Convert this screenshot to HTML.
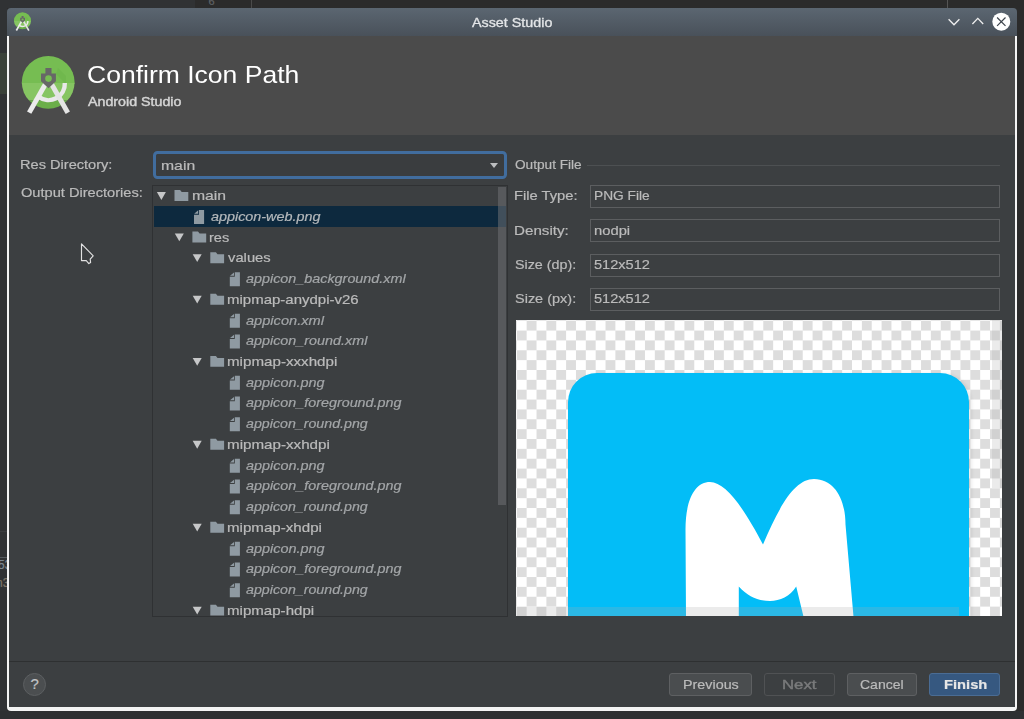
<!DOCTYPE html>
<html><head><meta charset="utf-8"><style>
*{margin:0;padding:0;box-sizing:border-box}
html,body{width:1024px;height:719px;overflow:hidden;background:#2b2b2b;position:relative;font-family:"Liberation Sans",sans-serif}
.a{position:absolute}
.t{position:absolute;white-space:nowrap;line-height:1;transform-origin:0 0;-webkit-text-stroke:0.2px currentColor}
.tri{position:absolute;width:0;height:0;border-left:4.7px solid transparent;border-right:4.7px solid transparent;border-top:7.8px solid #b4b6b8}
.fold{position:absolute;width:14.5px;height:10px}
.fold:before{content:"";position:absolute;left:0;top:0;width:6.8px;height:2px;background:#9aa5ad}
.fold:after{content:"";position:absolute;left:0;top:1.6px;width:14.5px;height:8.4px;background:#9aa5ad}
.file{position:absolute;width:10px;height:13.7px;background:#9aa5ad;clip-path:polygon(4px 0,100% 0,100% 100%,0 100%,0 4px)}
.inp{position:absolute;left:590.4px;width:409.8px;height:23px;border:1px solid #5c5e60;background:#3c3f41}
.btn{position:absolute;top:672.9px;height:23.2px;border:1px solid #5e6062;border-radius:3px;background:#4a4d4f}
</style></head><body>
<!-- outside background bits -->
<div class="a" style="left:0;top:0;width:195px;height:8px;background:#303234"></div>
<div class="a" style="left:195px;top:0;width:56px;height:8px;background:#2b2b2b"></div>
<div class="a" style="left:251px;top:0;width:1px;height:8px;background:#4a4a4a"></div><div class="a" style="left:947px;top:0;width:1px;height:8px;background:#555"></div>
<div class="t" style="left:208.5px;top:-4px;font-size:11px;color:#606366">6</div>
<div class="a" style="left:0;top:0;width:7px;height:719px;background:#303234"></div>
<div class="a" style="left:0;top:53px;width:7px;height:41px;background:#3a4139"></div>

<div class="a" style="left:0;top:711px;width:1024px;height:8px;background:#2e3032"></div>
<div class="t" style="left:-2px;top:559px;font-size:12px;color:#7d8790">53</div>
<div class="a" style="left:0;top:557px;width:7px;height:1px;background:#555a5e"></div>
<div class="t" style="left:-4px;top:577px;font-size:12px;color:#7d7568">n3</div><div class="a" style="left:0;top:531px;width:7px;height:1px;background:#3b3d3f"></div>
<!-- title bar -->
<div class="a" style="left:7px;top:7.9px;width:1010px;height:28.5px;border-radius:4px 4px 0 0;background:linear-gradient(#5b6671,#49515a)"></div>
<svg class="a" style="left:0;top:0" width="40" height="40" viewBox="0 0 40 40"><g transform="translate(22.5 20.7) scale(0.324) translate(-48.2 -82.3)">
 <clipPath id="cc2"><circle cx="48.2" cy="82.3" r="26.4"/></clipPath>
 <g clip-path="url(#cc2)">
  <rect x="20" y="54" width="58" height="30" fill="#76bd52"/>
  <rect x="20" y="83" width="58" height="17.5" fill="#86c562"/>
  <rect x="20" y="100.5" width="58" height="10" fill="#6bae49"/>
  <path d="M55.9 74 L66 84 L66 76 L58 68 Z" fill="#6db64b" opacity="0.7"/>
 </g>
 <path d="M64.8 83 A16.3 16.3 0 0 1 38.6 96.8" stroke="#e9e9e9" stroke-width="4.4" fill="none"/>
 <line x1="45.5" y1="84" x2="29.2" y2="112.6" stroke="#ebebeb" stroke-width="4.9"/>
 <line x1="51.5" y1="84" x2="67.8" y2="112.8" stroke="#e4e4e4" stroke-width="4.9"/>
 <path d="M45.4 68.1 H51.5 V73.4 H55.9 V81.3 L48.5 88.3 L41 81.3 V73.4 H45.4 Z" fill="#676767"/>
 <circle cx="48.5" cy="78.6" r="3.3" fill="#76bd52"/>
</g></svg>
<svg class="a" style="left:946px;top:16px" width="16" height="12" viewBox="0 0 16 12"><path d="M2.6 3.2 L8 8.8 L13.4 3.2" stroke="#f0f0f0" stroke-width="1.3" fill="none"/></svg>
<svg class="a" style="left:970px;top:15px" width="16" height="12" viewBox="0 0 16 12"><path d="M2.4 9 L7.8 3.4 L13.2 9" stroke="#f0f0f0" stroke-width="1.3" fill="none"/></svg>
<svg class="a" style="left:991px;top:12px" width="20" height="20" viewBox="0 0 20 20"><circle cx="10.3" cy="9.7" r="9" fill="#ffffff"/><path d="M6.1 5.5 L14.5 13.9 M14.5 5.5 L6.1 13.9" stroke="#3d444c" stroke-width="1.2"/></svg>

<!-- window body with white border -->
<div class="a" style="left:7px;top:36px;width:1010px;height:675px;background:#f4f4f4;border-radius:0 0 4px 4px"></div>
<div class="a" style="left:9px;top:36px;width:1006px;height:98.5px;background:#4b4b4b"></div>
<div class="a" style="left:9px;top:134.5px;width:1006px;height:572.5px;background:#3c3f41"></div>
<svg class="a" style="left:0;top:0" width="100" height="130" viewBox="0 0 100 130">
 <clipPath id="cc1"><circle cx="48.2" cy="82.3" r="26.4"/></clipPath>
 <g clip-path="url(#cc1)">
  <rect x="20" y="54" width="58" height="30" fill="#76bd52"/>
  <rect x="20" y="83" width="58" height="17.5" fill="#86c562"/>
  <rect x="20" y="100.5" width="58" height="10" fill="#6bae49"/>
  <path d="M55.9 74 L66 84 L66 76 L58 68 Z" fill="#6db64b" opacity="0.7"/>
 </g>
 <path d="M64.8 83 A16.3 16.3 0 0 1 38.6 96.8" stroke="#e9e9e9" stroke-width="4.4" fill="none"/>
 <line x1="45.5" y1="84" x2="29.2" y2="112.6" stroke="#ebebeb" stroke-width="4.9"/>
 <line x1="51.5" y1="84" x2="67.8" y2="112.8" stroke="#e4e4e4" stroke-width="4.9"/>
 <path d="M45.4 68.1 H51.5 V73.4 H55.9 V81.3 L48.5 88.3 L41 81.3 V73.4 H45.4 Z" fill="#676767"/>
 <circle cx="48.5" cy="78.6" r="3.3" fill="#76bd52"/>
</svg>

<!-- combo -->
<div class="a" style="left:153px;top:151.1px;width:353.9px;height:27.5px;border:3px solid #416d9e;border-radius:4.5px;background:#3a3d3f"></div>
<div class="a" style="left:489.5px;top:162.5px;width:0;height:0;border-left:4.2px solid transparent;border-right:4.2px solid transparent;border-top:5px solid #bcbec0"></div>

<!-- tree -->
<div class="a" style="left:152.3px;top:185px;width:355.5px;height:432.3px;border:1.4px solid #2f3133;background:#3c3f41"></div>
<div class="a" style="left:153.7px;top:206px;width:352.5px;height:20.7px;background:#0d293e"></div>
<div class="a" style="left:498px;top:187.3px;width:8px;height:317.5px;background:rgba(110,112,114,0.55)"></div>
<svg class="a" style="left:0;top:0" width="520" height="619" viewBox="0 0 520 619"><path d="M156.90 192.05 h9 l-4.5 7.85 z" fill="#c6c7c8"/><path d="M174.50 190.10 h5.6 l1.6 1.95 h6.6 v8.95 h-13.8 z" fill="#8f9aa2"/><path d="M199.00 210.03 h5.1 v14 h-10.1 v-9.4 h5 z M194.20 213.63 l4 -3.3 v3.3 z" fill="#8f9aa2"/><path d="M174.80 233.51 h9 l-4.5 7.85 z" fill="#c6c7c8"/><path d="M192.40 231.56 h5.6 l1.6 1.95 h6.6 v8.95 h-13.8 z" fill="#8f9aa2"/><path d="M192.70 254.24 h9 l-4.5 7.85 z" fill="#c6c7c8"/><path d="M210.30 252.29 h5.6 l1.6 1.95 h6.6 v8.95 h-13.8 z" fill="#8f9aa2"/><path d="M234.80 272.22 h5.1 v14 h-10.1 v-9.4 h5 z M230.00 275.82 l4 -3.3 v3.3 z" fill="#8f9aa2"/><path d="M192.70 295.70 h9 l-4.5 7.85 z" fill="#c6c7c8"/><path d="M210.30 293.75 h5.6 l1.6 1.95 h6.6 v8.95 h-13.8 z" fill="#8f9aa2"/><path d="M234.80 313.68 h5.1 v14 h-10.1 v-9.4 h5 z M230.00 317.28 l4 -3.3 v3.3 z" fill="#8f9aa2"/><path d="M234.80 334.41 h5.1 v14 h-10.1 v-9.4 h5 z M230.00 338.01 l4 -3.3 v3.3 z" fill="#8f9aa2"/><path d="M192.70 357.89 h9 l-4.5 7.85 z" fill="#c6c7c8"/><path d="M210.30 355.94 h5.6 l1.6 1.95 h6.6 v8.95 h-13.8 z" fill="#8f9aa2"/><path d="M234.80 375.87 h5.1 v14 h-10.1 v-9.4 h5 z M230.00 379.47 l4 -3.3 v3.3 z" fill="#8f9aa2"/><path d="M234.80 396.60 h5.1 v14 h-10.1 v-9.4 h5 z M230.00 400.20 l4 -3.3 v3.3 z" fill="#8f9aa2"/><path d="M234.80 417.33 h5.1 v14 h-10.1 v-9.4 h5 z M230.00 420.93 l4 -3.3 v3.3 z" fill="#8f9aa2"/><path d="M192.70 440.81 h9 l-4.5 7.85 z" fill="#c6c7c8"/><path d="M210.30 438.86 h5.6 l1.6 1.95 h6.6 v8.95 h-13.8 z" fill="#8f9aa2"/><path d="M234.80 458.79 h5.1 v14 h-10.1 v-9.4 h5 z M230.00 462.39 l4 -3.3 v3.3 z" fill="#8f9aa2"/><path d="M234.80 479.52 h5.1 v14 h-10.1 v-9.4 h5 z M230.00 483.12 l4 -3.3 v3.3 z" fill="#8f9aa2"/><path d="M234.80 500.25 h5.1 v14 h-10.1 v-9.4 h5 z M230.00 503.85 l4 -3.3 v3.3 z" fill="#8f9aa2"/><path d="M192.70 523.73 h9 l-4.5 7.85 z" fill="#c6c7c8"/><path d="M210.30 521.78 h5.6 l1.6 1.95 h6.6 v8.95 h-13.8 z" fill="#8f9aa2"/><path d="M234.80 541.71 h5.1 v14 h-10.1 v-9.4 h5 z M230.00 545.31 l4 -3.3 v3.3 z" fill="#8f9aa2"/><path d="M234.80 562.44 h5.1 v14 h-10.1 v-9.4 h5 z M230.00 566.04 l4 -3.3 v3.3 z" fill="#8f9aa2"/><path d="M234.80 583.17 h5.1 v14 h-10.1 v-9.4 h5 z M230.00 586.77 l4 -3.3 v3.3 z" fill="#8f9aa2"/><path d="M192.70 606.65 h9 l-4.5 7.85 z" fill="#c6c7c8"/><path d="M210.30 604.70 h5.6 l1.6 1.95 h6.6 v8.95 h-13.8 z" fill="#8f9aa2"/></svg>

<!-- output file -->
<div class="a" style="left:587px;top:164.6px;width:413px;height:1px;background:#4d5052"></div>
<div class="inp" style="top:184.8px"></div>
<div class="inp" style="top:219.3px"></div>
<div class="inp" style="top:253.6px"></div>
<div class="inp" style="top:288.4px"></div>

<!-- preview -->
<div class="a" id="preview" style="left:516px;top:320.4px;width:486px;height:295.8px;overflow:hidden;background:conic-gradient(#dddddd 0 25%,#ffffff 0 50%,#dddddd 0 75%,#ffffff 0) 0.8px 0.7px/19.73px 19.73px">
  <div class="a" style="left:52.5px;top:53px;width:403px;height:300px;border-radius:30px;background:rgba(0,0,0,0.07);filter:blur(1.5px)"></div>
  <div class="a" style="left:52.1px;top:52.4px;width:400.6px;height:300px;border-radius:29px;background:#03bdf7"></div>
  <svg class="a" style="left:0;top:0" width="486" height="296" viewBox="516 320.4 486 296">
    <path d="M686 617 L685.5 530 C685.5 500 695 482.5 710 482.5 C725 483 742 505 763 545 C780 505 795 479.5 814 479.5 C835 480 845.5 500 845.5 525 L853.5 617 L803.5 617 L796.2 587 C790 597 780 601.4 770 601.4 C758 601.4 748 597 738.8 587 L738.8 617 Z" fill="#ffffff"/>
  </svg>
  <div class="a" style="left:0;top:286.2px;width:442.5px;height:9.6px;background:rgba(170,170,170,0.24)"></div>
  <div class="a" style="left:475.8px;top:0;width:10px;height:168px;background:rgba(170,170,170,0.24)"></div>
</div>

<!-- footer -->
<div class="a" style="left:9px;top:660.5px;width:1006px;height:1.2px;background:#2e3031"></div>
<div class="a" style="left:23.3px;top:673px;width:23px;height:23px;border-radius:50%;background:#4b4e50;border:1px solid #5c5f61"></div>
<div class="t" style="left:30.6px;top:676px;font-size:15px;color:#c2c4c6">?</div>
<svg class="a" style="left:0;top:0" width="120" height="300" viewBox="0 0 120 300"><path d="M81.5 243.8 L81.5 260.6 L86.3 260.6 L88.8 263.6 L90.6 262.4 L90.2 259.2 L93.2 255.8 Z" stroke="#e2e2e2" stroke-width="1.15" fill="none" stroke-linejoin="round"/></svg>

<div class="btn" style="left:669.1px;width:82.7px"></div>
<div class="btn" style="left:764.3px;width:70.4px;background:#3c3f41;border-color:#505254"></div>
<div class="btn" style="left:846.6px;width:70.6px"></div>
<div class="btn" style="left:929.1px;width:70.9px;background:#365880;border-color:#4a6c94"></div>

<div class="t" id="title" style="left:472.14px;top:16.86px;font-size:12.8px;font-weight:normal;font-style:normal;color:#e4e6e8;transform:scaleX(1.1182);-webkit-text-stroke:0.3px #e4e6e8;">Asset Studio</div><div class="t" id="h1" style="left:86.79px;top:62.75px;font-size:24.4px;font-weight:normal;font-style:normal;color:#ffffff;transform:scaleX(1.0876);-webkit-text-stroke:0px;">Confirm Icon Path</div><div class="t" id="h2" style="left:87.68px;top:96.16px;font-size:12.8px;font-weight:normal;font-style:normal;color:#d4d4d4;transform:scaleX(1.1128);-webkit-text-stroke:0.45px #d4d4d4;">Android Studio</div><div class="t" id="resdir" style="left:20.34px;top:158.66px;font-size:12.8px;font-weight:normal;font-style:normal;color:#bbbbbb;transform:scaleX(1.1402);">Res Directory:</div><div class="t" id="outdirs" style="left:20.79px;top:186.86px;font-size:12.8px;font-weight:normal;font-style:normal;color:#bbbbbb;transform:scaleX(1.1423);">Output Directories:</div><div class="t" id="combo" style="left:160.80px;top:159.76px;font-size:12.8px;font-weight:normal;font-style:normal;color:#bbbbbb;transform:scaleX(1.2312);">main</div><div class="t" id="outfile" style="left:515.11px;top:158.96px;font-size:12.8px;font-weight:normal;font-style:normal;color:#bbbbbb;transform:scaleX(1.0658);">Output File</div><div class="t" id="ftype" style="left:514.48px;top:190.16px;font-size:12.8px;font-weight:normal;font-style:normal;color:#bbbbbb;transform:scaleX(1.1505);">File Type:</div><div class="t" id="ftypev" style="left:594.08px;top:190.16px;font-size:12.8px;font-weight:normal;font-style:normal;color:#bbbbbb;transform:scaleX(1.0726);">PNG File</div><div class="t" id="dens" style="left:514.39px;top:224.96px;font-size:12.8px;font-weight:normal;font-style:normal;color:#bbbbbb;transform:scaleX(1.1847);">Density:</div><div class="t" id="densv" style="left:594.22px;top:224.96px;font-size:12.8px;font-weight:normal;font-style:normal;color:#bbbbbb;transform:scaleX(1.1541);">nodpi</div><div class="t" id="sdp" style="left:514.79px;top:259.06px;font-size:12.8px;font-weight:normal;font-style:normal;color:#bbbbbb;transform:scaleX(1.1179);">Size (dp):</div><div class="t" id="sdpv" style="left:594.35px;top:259.06px;font-size:12.8px;font-weight:normal;font-style:normal;color:#bbbbbb;transform:scaleX(1.1378);">512x512</div><div class="t" id="spx" style="left:514.78px;top:293.26px;font-size:12.8px;font-weight:normal;font-style:normal;color:#bbbbbb;transform:scaleX(1.1318);">Size (px):</div><div class="t" id="spxv" style="left:594.35px;top:293.26px;font-size:12.8px;font-weight:normal;font-style:normal;color:#bbbbbb;transform:scaleX(1.1378);">512x512</div><div class="t" id="prev" style="left:682.57px;top:679.26px;font-size:12.8px;font-weight:normal;font-style:normal;color:#bbbbbb;transform:scaleX(1.1202);">Previous</div><div class="t" id="next" style="left:781.59px;top:679.26px;font-size:12.8px;font-weight:normal;font-style:normal;color:#7a7b7c;transform:scaleX(1.3085);-webkit-text-stroke:0.4px #7a7b7c;">Next</div><div class="t" id="cancel" style="left:860.34px;top:679.06px;font-size:12.8px;font-weight:normal;font-style:normal;color:#bbbbbb;transform:scaleX(1.0955);">Cancel</div><div class="t" id="finish" style="left:944.19px;top:679.06px;font-size:12.8px;font-weight:bold;font-style:normal;color:#e6e6e6;transform:scaleX(1.1487);">Finish</div><div class="t" id="row0" style="left:191.52px;top:190.16px;font-size:12.8px;font-weight:normal;font-style:normal;color:#bbbbbb;transform:scaleX(1.2302);">main</div><div class="t" id="row1" style="left:210.50px;top:210.89px;font-size:12.8px;font-weight:normal;font-style:italic;color:#b4b8bb;transform:scaleX(1.1229);">appicon-web.png</div><div class="t" id="row2" style="left:209.26px;top:231.62px;font-size:12.8px;font-weight:normal;font-style:normal;color:#bbbbbb;transform:scaleX(1.1384);">res</div><div class="t" id="row3" style="left:228.34px;top:252.35px;font-size:12.8px;font-weight:normal;font-style:normal;color:#bbbbbb;transform:scaleX(1.1547);">values</div><div class="t" id="row4" style="left:245.90px;top:273.08px;font-size:12.8px;font-weight:normal;font-style:italic;color:#a3a6a8;transform:scaleX(1.1220);">appicon_background.xml</div><div class="t" id="row5" style="left:226.80px;top:293.81px;font-size:12.8px;font-weight:normal;font-style:normal;color:#bbbbbb;transform:scaleX(1.1716);">mipmap-anydpi-v26</div><div class="t" id="row6" style="left:245.86px;top:314.54px;font-size:12.8px;font-weight:normal;font-style:italic;color:#a3a6a8;transform:scaleX(1.1412);">appicon.xml</div><div class="t" id="row7" style="left:245.90px;top:335.27px;font-size:12.8px;font-weight:normal;font-style:italic;color:#a3a6a8;transform:scaleX(1.1225);">appicon_round.xml</div><div class="t" id="row8" style="left:226.79px;top:356.00px;font-size:12.8px;font-weight:normal;font-style:normal;color:#bbbbbb;transform:scaleX(1.1841);">mipmap-xxxhdpi</div><div class="t" id="row9" style="left:245.90px;top:376.73px;font-size:12.8px;font-weight:normal;font-style:italic;color:#a3a6a8;transform:scaleX(1.1279);">appicon.png</div><div class="t" id="row10" style="left:245.90px;top:397.46px;font-size:12.8px;font-weight:normal;font-style:italic;color:#a3a6a8;transform:scaleX(1.1204);">appicon_foreground.png</div><div class="t" id="row11" style="left:245.91px;top:418.19px;font-size:12.8px;font-weight:normal;font-style:italic;color:#a3a6a8;transform:scaleX(1.1111);">appicon_round.png</div><div class="t" id="row12" style="left:226.79px;top:438.92px;font-size:12.8px;font-weight:normal;font-style:normal;color:#bbbbbb;transform:scaleX(1.1851);">mipmap-xxhdpi</div><div class="t" id="row13" style="left:245.90px;top:459.65px;font-size:12.8px;font-weight:normal;font-style:italic;color:#a3a6a8;transform:scaleX(1.1279);">appicon.png</div><div class="t" id="row14" style="left:245.90px;top:480.38px;font-size:12.8px;font-weight:normal;font-style:italic;color:#a3a6a8;transform:scaleX(1.1204);">appicon_foreground.png</div><div class="t" id="row15" style="left:245.91px;top:501.11px;font-size:12.8px;font-weight:normal;font-style:italic;color:#a3a6a8;transform:scaleX(1.1111);">appicon_round.png</div><div class="t" id="row16" style="left:226.79px;top:521.84px;font-size:12.8px;font-weight:normal;font-style:normal;color:#bbbbbb;transform:scaleX(1.1807);">mipmap-xhdpi</div><div class="t" id="row17" style="left:245.90px;top:542.57px;font-size:12.8px;font-weight:normal;font-style:italic;color:#a3a6a8;transform:scaleX(1.1279);">appicon.png</div><div class="t" id="row18" style="left:245.90px;top:563.30px;font-size:12.8px;font-weight:normal;font-style:italic;color:#a3a6a8;transform:scaleX(1.1204);">appicon_foreground.png</div><div class="t" id="row19" style="left:245.91px;top:584.03px;font-size:12.8px;font-weight:normal;font-style:italic;color:#a3a6a8;transform:scaleX(1.1111);">appicon_round.png</div><div class="t" id="row20" style="left:226.80px;top:604.76px;font-size:12.8px;font-weight:normal;font-style:normal;color:#bbbbbb;transform:scaleX(1.1780);">mipmap-hdpi</div>
</body></html>
